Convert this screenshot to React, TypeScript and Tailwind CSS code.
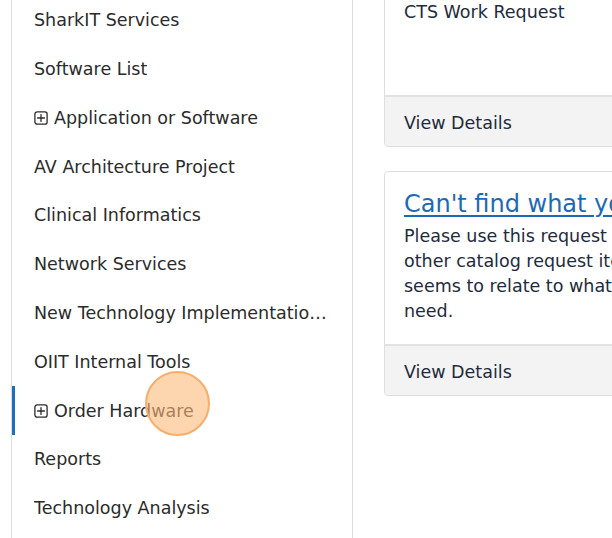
import React from 'react';

const navItems = [
  { label: 'SharkIT Services' },
  { label: 'Software List' },
  { label: 'Application or Software', expandable: true },
  { label: 'AV Architecture Project' },
  { label: 'Clinical Informatics' },
  { label: 'Network Services' },
  { label: 'New Technology Implementation Services' },
  { label: 'OIIT Internal Tools' },
  { label: 'Order Hardware', expandable: true, active: true },
  { label: 'Reports' },
  { label: 'Technology Analysis' },
];

const PlusBox = () => (
  <svg width="14" height="14" viewBox="0 0 14 14" className="shrink-0" fill="none" stroke="#2b2b2b" strokeWidth="1.3">
    <rect x="0.9" y="0.9" width="12.2" height="12.2" rx="2.2" />
    <path d="M7 3.6v6.8M3.6 7h6.8" strokeLinecap="round" />
  </svg>
);

const App: React.FC = () => {
  return (
    <div
      className="relative h-[538px] w-[612px] overflow-hidden bg-white"
      style={{ fontFamily: '"DejaVu Sans", sans-serif' }}
    >
      <div className="flex h-full pl-[11px]">
        {/* sidebar */}
        <nav className="w-[342px] shrink-0 border-x border-[#dcdcdc] pr-[20px] -mt-[4px]">
          {navItems.map((item) => (
            <div
              key={item.label}
              className={
                'flex h-[48.8px] items-center gap-[6px] text-[17.5px] text-[#2b2b2b] ' +
                (item.active ? 'border-l-[3px] border-[#1a6fc0] pl-[19px]' : 'pl-[22px]')
              }
            >
              {item.expandable && <PlusBox />}
              <span className="truncate">{item.label}</span>
            </div>
          ))}
        </nav>

        {/* cards */}
        <div className="ml-[31px] flex w-[330px] shrink-0 flex-col gap-[24px] -mt-[20px]">
          <div className="overflow-hidden rounded-[4px] border border-[#dedede]">
            <div className="h-[114px] px-[19px] pt-[19px] text-[17.5px] leading-[25px] text-[#1e2b3c]">
              CTS Work Request
            </div>
            <div className="flex h-[51px] items-center border-t-2 border-[#e2e2e2] bg-[#f3f3f3] px-[19px] pt-[3px] text-[17.5px] text-[#1e2b3c]">
              View Details
            </div>
          </div>

          <div className="overflow-hidden rounded-[4px] border border-[#dedede]">
            <div className="px-[19px] pt-[14px] pb-[20px]">
              <a className="mb-[2px] block whitespace-nowrap text-[24px] leading-[36px] text-[#1b6ab5] underline underline-offset-[3px]">
                Can't find what you need?
              </a>
              <p className="text-[17.5px] leading-[25px] text-[#1e2b3c]">
                Please use this request if no other catalog request item seems to relate to what you need.
              </p>
            </div>
            <div className="flex h-[51px] items-center border-t-2 border-[#e2e2e2] bg-[#f3f3f3] px-[19px] pt-[3px] text-[17.5px] text-[#1e2b3c]">
              View Details
            </div>
          </div>
        </div>
      </div>

      {/* click indicator */}
      <div className="pointer-events-none absolute left-[145px] top-[371px] h-[65px] w-[65px] rounded-full border-2 border-[#f8ad69] bg-[#fcb97a]/60" />
    </div>
  );
};

export default App;
